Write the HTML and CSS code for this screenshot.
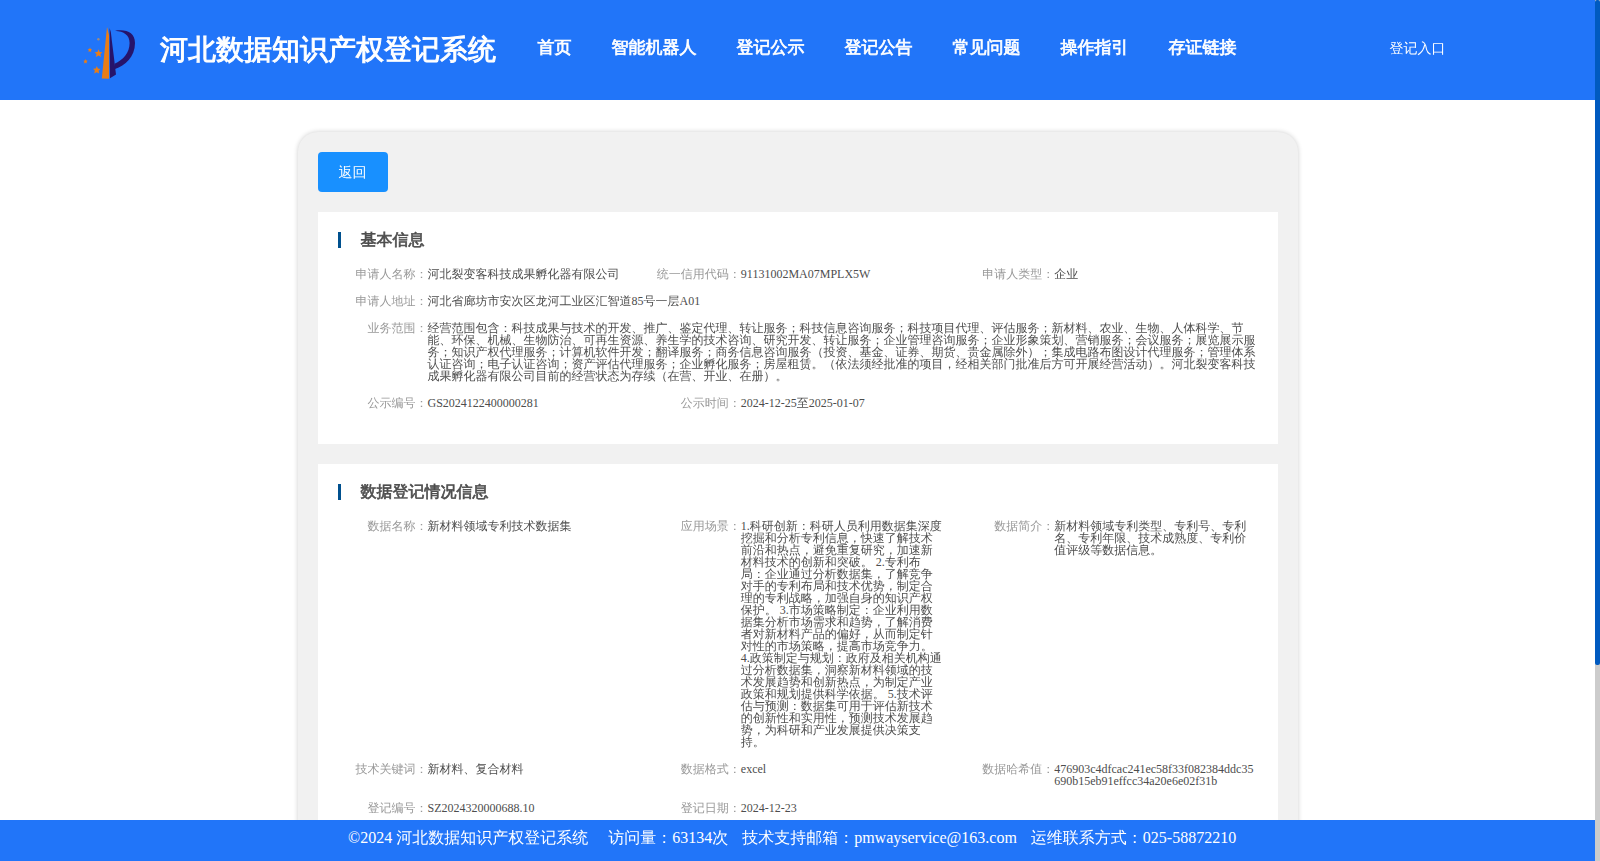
FILE: index.html
```
<!DOCTYPE html>
<html lang="zh-CN">
<head>
    <meta charset="UTF-8">
    <meta name="viewport" content="width=device-width, initial-scale=1.0">
    <title>河北数据知识产权登记系统</title>
    <link rel="stylesheet" href="styles.css">
</head>
<body>
    <header class="header">
        <svg class="logo" viewBox="0 0 54 54" width="54" height="54">
            <path fill="#e87d17" d="M24 0 L26 8 L26 51.8 L18.8 51.4 Z"/>
            <path fill="#26146b" d="M26.6 1 L27.8 5 L33 47.5 L27 51.3 Z"/>
            <path fill="#26146b" d="M32 3.8 C43 2 52 5 52 16 C52 30 42 38.5 32 42 L31.5 36.8 C40 33 46.6 26 46.6 16 C46.6 8 41 4.6 32 3.8 Z"/>
            <g fill="#e87d17">
                <path d="M15.5 22.2 L16.6 25 L19.4 25.2 L17.4 27.2 L18.2 30 L15.5 28.5 L12.8 30 L13.6 27.2 L11.6 25.2 L14.4 25 Z"/>
                <path d="M13.8 39 L14.9 41.6 L17.4 42 L15.6 43.8 L16.1 46.6 L13.7 45.2 L11.1 46.6 L11.9 43.8 L10 41.8 L12.7 41.6 Z"/>
                <path d="M7 20.5 L7.7 22 L9 22.3 L8 23.4 L8.3 25 L6.9 24.2 L5.4 25 L5.8 23.4 L4.8 22.2 L6.3 22 Z"/>
                <path d="M2.6 32 L3.3 33.5 L4.6 33.8 L3.6 35 L3.8 36.6 L2.5 35.8 L1 36.5 L1.4 35 L0.4 33.8 L1.9 33.5 Z"/>
            </g>
            <circle cx="15.4" cy="12.3" r="1.2" fill="#a08a7c"/>
        </svg>
        <h1 class="site-title">河北数据知识产权登记系统</h1>
        <nav class="nav">
            <a>首页</a>
            <a>智能机器人</a>
            <a>登记公示</a>
            <a>登记公告</a>
            <a>常见问题</a>
            <a>操作指引</a>
            <a>存证链接</a>
        </nav>
        <a class="entry">登记入口</a>
    </header>

    <main class="detail">
        <button class="btn-back">返回</button>

        <section class="panel">
            <h2>基本信息</h2>
            <div class="info">
                <div class="item"><label>申请人名称：</label><p>河北裂变客科技成果孵化器有限公司</p></div>
                <div class="item"><label>统一信用代码：</label><p>91131002MA07MPLX5W</p></div>
                <div class="item"><label>申请人类型：</label><p>企业</p></div>
                <div class="item full"><label>申请人地址：</label><p>河北省廊坊市安次区龙河工业区汇智道85号一层A01</p></div>
                <div class="item full"><label>业务范围：</label><p>经营范围包含：科技成果与技术的开发、推广、鉴定代理、转让服务；科技信息咨询服务；科技项目代理、评估服务；新材料、农业、生物、人体科学、节能、环保、机械、生物防治、可再生资源、养生学的技术咨询、研究开发、转让服务；企业管理咨询服务；企业形象策划、营销服务；会议服务；展览展示服务；知识产权代理服务；计算机软件开发；翻译服务；商务信息咨询服务（投资、基金、证券、期货、贵金属除外）；集成电路布图设计代理服务；管理体系认证咨询；电子认证咨询；资产评估代理服务；企业孵化服务；房屋租赁。（依法须经批准的项目，经相关部门批准后方可开展经营活动）。河北裂变客科技成果孵化器有限公司目前的经营状态为存续（在营、开业、在册）。</p></div>
                <div class="item"><label>公示编号：</label><p>GS2024122400000281</p></div>
                <div class="item"><label>公示时间：</label><p>2024-12-25至2025-01-07</p></div>
            </div>
        </section>

        <section class="panel">
            <h2>数据登记情况信息</h2>
            <div class="info">
                <div class="item"><label>数据名称：</label><p>新材料领域专利技术数据集</p></div>
                <div class="item"><label>应用场景：</label><p>1.科研创新：科研人员利用数据集深度挖掘和分析专利信息，快速了解技术前沿和热点，避免重复研究，加速新材料技术的创新和突破。 2.专利布局：企业通过分析数据集，了解竞争对手的专利布局和技术优势，制定合理的专利战略，加强自身的知识产权保护。 3.市场策略制定：企业利用数据集分析市场需求和趋势，了解消费者对新材料产品的偏好，从而制定针对性的市场策略，提高市场竞争力。 4.政策制定与规划：政府及相关机构通过分析数据集，洞察新材料领域的技术发展趋势和创新热点，为制定产业政策和规划提供科学依据。 5.技术评估与预测：数据集可用于评估新技术的创新性和实用性，预测技术发展趋势，为科研和产业发展提供决策支持。</p></div>
                <div class="item"><label>数据简介：</label><p>新材料领域专利类型、专利号、专利名、专利年限、技术成熟度、专利价值评级等数据信息。</p></div>
                <div class="item"><label>技术关键词：</label><p>新材料、复合材料</p></div>
                <div class="item"><label>数据格式：</label><p>excel</p></div>
                <div class="item"><label>数据哈希值：</label><p>476903c4dfcac241ec58f33f082384ddc35690b15eb91effcc34a20e6e02f31b</p></div>
                <div class="item"><label>登记编号：</label><p>SZ2024320000688.10</p></div>
                <div class="item"><label>登记日期：</label><p>2024-12-23</p></div>
            </div>
        </section>
    </main>

    <footer class="footer">
        <span class="copyright">©2024 河北数据知识产权登记系统</span>
        <span>访问量：63134次</span>
        <span>技术支持邮箱：pmwayservice@163.com</span>
        <span>运维联系方式：025-58872210</span>
    </footer>

    <div class="scrollbar"><div class="thumb"></div></div>
</body>
</html>
```
FILE: styles.css
```
* {
    margin: 0;
    padding: 0;
    box-sizing: border-box;
}

body {
    height: 100vh;
    padding-right: 5px;
    overflow: hidden;
    background: #fff;
    color: #4d4d4d;
    font-family: "Liberation Serif", "WenQuanYi Zen Hei", "Noto Sans CJK SC", serif;
    font-size: 12px;
    line-height: 1;
}

.header {
    display: flex;
    align-items: center;
    height: 100px;
    padding-left: 83px;
    background: #2175f9;
    color: #fff;
}

.logo {
    margin-top: 7px;
}

.site-title {
    margin-left: 23px;
    font-size: 28px;
    white-space: nowrap;
    -webkit-text-stroke: 1px;
}

.nav {
    display: flex;
    gap: 40px;
    margin: 0 0 5px 41.5px;
    font-size: 17px;
    font-weight: bold;
    white-space: nowrap;
    -webkit-text-stroke: 0.7px;
}

.entry {
    margin: 0 149.5px 3px auto;
    font-size: 14px;
}

.detail {
    width: 1000px;
    margin: 32px auto 0;
    padding: 20px;
    border-radius: 20px;
    background: #f1f1f1;
    box-shadow: 0 0 5px rgba(0, 0, 0, 0.2);
}

.btn-back {
    display: block;
    width: 70px;
    height: 40px;
    margin-bottom: 20px;
    padding-top: 2px;
    border: none;
    border-radius: 4px;
    background: #1890ff;
    color: #fff;
    font-family: inherit;
    font-size: 14px;
}

.panel {
    margin-bottom: 20px;
    padding: 20px 20px 35px;
    background: #fff;
}

.panel h2 {
    height: 16px;
    margin-bottom: 20px;
    padding-left: 20px;
    border-left: 3px solid #00508e;
    font-size: 16px;
    line-height: 16px;
    -webkit-text-stroke: 0.65px;
}

.info {
    display: grid;
    grid-template-columns: repeat(3, 1fr);
    gap: 15px 20px;
}

.item {
    display: flex;
    min-width: 0;
}

.full {
    grid-column: 1 / -1;
}

.item label {
    flex: 0 0 90px;
    color: #999;
    text-align: right;
}

.item p {
    flex: 1;
    min-width: 0;
    word-wrap: break-word;
}

.footer {
    position: fixed;
    left: 0;
    right: 5px;
    bottom: 0;
    display: flex;
    gap: 14px;
    height: 41px;
    padding: 10px 0 0 348px;
    background: #2175f9;
    color: #fff;
    font-size: 16px;
    white-space: nowrap;
}

.copyright {
    margin-right: 6px;
}

.scrollbar {
    position: fixed;
    top: 0;
    right: 0;
    width: 5px;
    height: 100%;
    background: #ccc;
}

.thumb {
    height: 665px;
    border-radius: 2px;
    background: #005ac0;
}
```
